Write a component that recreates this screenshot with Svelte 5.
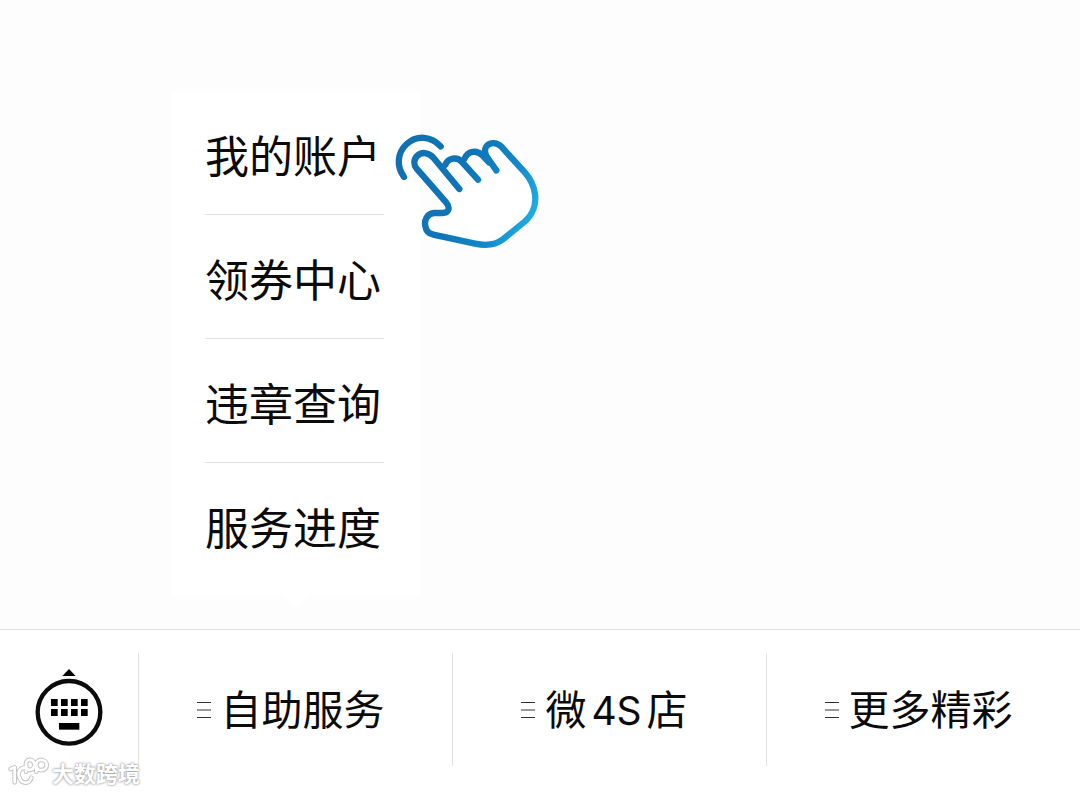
<script lang="ts">
    const entries = ['我的账户', '领券中心', '违章查询', '服务进度'];
    const keyColumns = [153, 183, 213, 243];

    let menuOpen = $state(true);

    function toggleMenu() {
        menuOpen = !menuOpen;
    }
</script>

{#snippet lines()}
    <svg class="lines" viewBox="0 0 14 16" aria-hidden="true">
        <path d="M0 .5H14M0 8H14M0 15.5H14" />
    </svg>
{/snippet}

<div class="page">
    <main class="chat">
        {#if menuOpen}
            <nav class="menu" aria-label="自助服务">
                {#each entries as entry}
                    <button class="entry">{entry}</button>
                {/each}
                <svg class="hand" viewBox="0 0 495 390" aria-hidden="true">
                    <defs>
                        <linearGradient id="hand-blue" gradientUnits="userSpaceOnUse" x1="60" y1="80" x2="460" y2="250">
                            <stop offset="0" stop-color="#1170b2" />
                            <stop offset="0.45" stop-color="#0f75b8" />
                            <stop offset="0.75" stop-color="#1288c8" />
                            <stop offset="1" stop-color="#20aee4" />
                        </linearGradient>
                    </defs>
                    <path class="palm" d="M223 192L144 97C129 80 108 81 96 93C85 105 86 120 95 131L184 233C197 249 190 264 173 264L148 264C126 265 117 287 121 303C123 318 131 326 145 329L270 356C303 363 331 361 354 343L420 289C444 268 454 237 450 207C446 181 437 162 420 143L349 65C334 49 311 52 303 66C297 77 301 91 310 102L334 136" />
                    <path d="M181 119C190 99 215 94 231 111L279 164M238 102C248 78 275 73 292 91L312 112" />
                    <path d="M167 64C139 33 96 29 65 57C36 84 34 124 57 156" />
                </svg>
            </nav>
        {/if}
    </main>

    <footer class="bar">
        <button class="keyboard" aria-label="键盘">
            <svg viewBox="105 42 204 234" aria-hidden="true">
                <path d="M207 42L227 63H187Z" />
                <circle cx="207" cy="172" r="94" />
                {#each keyColumns as x}
                    <rect {x} y="132" width="20" height="21" />
                    <rect {x} y="162" width="20" height="21" />
                {/each}
                <rect x="177" y="204" width="61" height="20" />
            </svg>
        </button>
        <button class="tab" aria-expanded={menuOpen} onclick={toggleMenu}>
            {@render lines()}<span class="label">自助服务</span>
        </button>
        <button class="tab">
            {@render lines()}<span class="label">微<span class="latin">4S</span>店</span>
        </button>
        <button class="tab">
            {@render lines()}<span class="label">更多精彩</span>
        </button>
    </footer>

    <div class="watermark">
        <svg viewBox="24 306 126 90" aria-hidden="true">
            <path class="edge" d="M32 342L44 337V382M72 338C54 342 52 358 60 372C68 388 90 386 94 368M78 350V326C78 310 103 310 103 330C103 347 84 348 80 338M109 350V326C112 310 140 311 140 330C140 348 115 349 111 338" />
            <path d="M32 342L44 337V382M72 338C54 342 52 358 60 372C68 388 90 386 94 368M78 350V326C78 310 103 310 103 330C103 347 84 348 80 338M109 350V326C112 310 140 311 140 330C140 348 115 349 111 338" />
        </svg>
        <span>大数跨境</span>
    </div>
</div>

<style>
:global(body) {
    margin: 0;
    background: #fff;
}
.page {
    position: relative;
    display: flex;
    flex-direction: column;
    min-height: 100vh;
    color: #0b0b0b;
    font-family: "Noto Sans CJK SC", sans-serif;
}
button {
    margin: 0;
    padding: 0;
    border: 0;
    background: none;
    color: inherit;
    font: inherit;
    cursor: pointer;
}
.chat {
    position: relative;
    flex: 1;
    min-height: 560px;
    background: #fdfdfd;
}
.menu {
    position: absolute;
    left: 172px;
    bottom: 34px;
    box-sizing: border-box;
    width: 248px;
    padding: 0 36px 0 33px;
    border-radius: 4px;
    background: #fff;
}
.menu::after {
    content: "";
    position: absolute;
    top: 100%;
    left: 50%;
    margin-left: -12px;
    border: 12px solid transparent;
    border-top-color: #fff;
    border-bottom: 0;
}
.entry {
    display: block;
    width: 100%;
    padding: 41px 0 38px;
    border-bottom: 1px solid #e2e2e2;
    font-size: 44px;
    line-height: 44px;
    text-align: left;
    white-space: nowrap;
}
.entry:last-of-type {
    padding-bottom: 47px;
    border-bottom: 0;
}
.hand {
    position: absolute;
    top: 34px;
    left: 213px;
    width: 165px;
    height: 130px;
    fill: none;
    stroke: url(#hand-blue);
    stroke-width: 19;
    stroke-linecap: round;
    stroke-linejoin: round;
    pointer-events: none;
}
.hand .palm {
    fill: #fff;
}
.bar {
    display: flex;
    padding: 23px 0 27px;
    border-top: 1px solid #dedede;
    background: #fff;
}
.keyboard {
    flex: none;
    width: 138px;
    height: 113px;
}
.keyboard svg {
    display: block;
    width: 68px;
    height: 78px;
    margin: 0 auto 4px;
}
.keyboard circle {
    fill: none;
    stroke: #0b0b0b;
    stroke-width: 13;
}
.tab {
    flex: 1;
    display: flex;
    align-items: center;
    justify-content: center;
    gap: 10px;
    padding-right: 10px;
    border-left: 1px solid #e2e2e2;
    font-size: 41px;
    line-height: 48px;
    white-space: nowrap;
}
.label {
    padding-bottom: 6px;
}
.lines {
    width: 14px;
    height: 16px;
    fill: none;
    stroke: #333;
}
.latin {
    margin: 0 5px;
    font-family: Inter, "Liberation Sans", sans-serif;
    font-size: 39px;
    line-height: 1px;
}
.watermark {
    position: absolute;
    left: 8px;
    bottom: 6px;
    display: flex;
    align-items: center;
    gap: 2px;
    color: #fff;
    font-size: 22px;
    font-weight: 700;
    line-height: 30px;
    text-shadow: 0 0 2px #999, 0 0 3px #aaa;
    pointer-events: none;
}
.watermark svg {
    width: 42px;
    height: 30px;
    fill: none;
    stroke: #fff;
    stroke-width: 8;
    stroke-linecap: round;
    stroke-linejoin: round;
}
.watermark .edge {
    stroke: #c4c4c4;
    stroke-width: 14;
}
</style>
